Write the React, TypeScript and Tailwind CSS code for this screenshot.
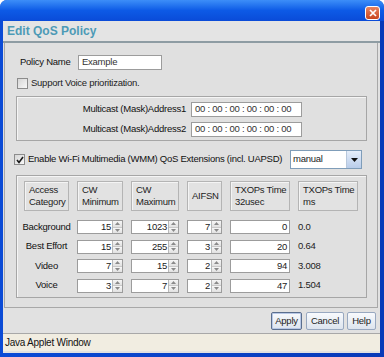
import React from "react";

const font = "font-['Liberation_Sans',Arial,sans-serif]";

const rows = [
  { name: "Background", cwMin: "15", cwMax: "1023", aifsn: "7", txop: "0", ms: "0.0" },
  { name: "Best Effort", cwMin: "15", cwMax: "255", aifsn: "3", txop: "20", ms: "0.64" },
  { name: "Video", cwMin: "7", cwMax: "15", aifsn: "2", txop: "94", ms: "3.008" },
  { name: "Voice", cwMin: "3", cwMax: "7", aifsn: "2", txop: "47", ms: "1.504" },
];

function Arrow({ up }: { up?: boolean }) {
  return (
    <svg width="5" height="3" viewBox="0 0 5 3">
      <path d={up ? "M0 3 L2.5 0 L5 3 Z" : "M0 0 L5 0 L2.5 3 Z"} fill="#8a8a8a" />
    </svg>
  );
}

function Spinner({ value }: { value: string }) {
  return (
    <div className="flex h-[14px] w-full border border-[#9c9c9c] bg-white">
      <div className="flex-1 pr-[1px] text-right leading-[12px] text-[#222]">{value}</div>
      <div className="flex w-[10px] flex-col border-l border-[#b9b9b9]">
        <div className="flex flex-1 items-center justify-center border-b border-[#c9c9c9] bg-gradient-to-b from-[#f7f7f7] to-[#e1e1e1]">
          <Arrow up />
        </div>
        <div className="flex flex-1 items-center justify-center bg-gradient-to-b from-[#f7f7f7] to-[#e1e1e1]">
          <Arrow />
        </div>
      </div>
    </div>
  );
}

function HeadCell({ lines, center }: { lines: string[]; center?: boolean }) {
  return (
    <div
      className={`flex h-[30px] flex-col border border-[#b4b4b4] bg-[#e2e2e2] pl-[4px] leading-[12px] text-[#222] shadow-[inset_1px_1px_0_#f4f4f4] ${
        center ? "justify-center" : "justify-center"
      }`}
    >
      {lines.map((l) => (
        <span key={l} className="whitespace-nowrap">
          {l}
        </span>
      ))}
    </div>
  );
}

function Check({ checked }: { checked?: boolean }) {
  return (
    <div className="flex h-[11px] w-[11px] items-center justify-center border border-[#8c8c8c] bg-gradient-to-br from-[#d6d6d6] to-[#f8f8f8]">
      {checked && (
        <svg width="8" height="8" viewBox="0 0 8 8">
          <path d="M1 4 L3 6.5 L7 1" stroke="#1a1a1a" strokeWidth="1.6" fill="none" />
        </svg>
      )}
    </div>
  );
}

export default function App() {
  return (
    <div
      className={`${font} flex h-[357px] w-[384px] flex-col overflow-hidden rounded-t-[7px] bg-gradient-to-r from-[#0b4bd6] to-[#0839b8] text-[9.5px] tracking-[-0.25px] text-[#111]`}
    >
      {/* title bar */}
      <div className="flex h-[21px] items-start justify-end bg-gradient-to-b from-[#3d8ef8] via-[#0d5ae6] to-[#0a4bd8] pr-[4px] pt-[6px]">
        <div className="flex h-[14px] w-[15px] items-center justify-center rounded-[3px] border border-white bg-gradient-to-b from-[#e8835f] to-[#c8441c]">
          <svg width="8" height="8" viewBox="0 0 8 8">
            <path d="M1 1 L7 7 M7 1 L1 7" stroke="#fff" strokeWidth="1.7" />
          </svg>
        </div>
      </div>

      {/* body */}
      <div className="mb-[4px] ml-[3px] mr-[4px] flex flex-1 flex-col bg-[#e1e1e1]">
        <div className="flex h-[22px] items-center border-b-2 border-[#8e9ca3] bg-[#e4e4e4] pl-[4px] text-[12px] font-bold tracking-normal text-[#4d9ab6]">
          Edit QoS Policy
        </div>

        <div className="ml-[1px] mr-[2px] flex h-[265px] flex-col border-b border-l border-r border-[#a8a8a8] bg-[#e0e0e0]">
          {/* policy name */}
          <div className="mt-[12px] flex h-[15px] items-center pl-[15px]">
            <span className="w-[58px]">Policy Name</span>
            <div className="flex h-[15px] w-[84px] items-center border border-[#9c9c9c] bg-white pl-[3px] text-[#333]">
              Example
            </div>
          </div>

          {/* voice prioritization */}
          <div className="mt-[8px] flex h-[11px] items-center gap-[3px] pl-[12px] text-[#222]">
            <Check />
            <span>Support Voice prioritization.</span>
          </div>

          {/* multicast group */}
          <div className="ml-[11px] mt-[7px] flex h-[45px] w-[351px] flex-col gap-[5px] border border-[#a6a6a6] pt-[5px] shadow-[inset_1px_1px_0_#f5f5f5]">
            {["Multicast (Mask)Address1", "Multicast (Mask)Address2"].map((l) => (
              <div key={l} className="flex h-[15px] items-center">
                <span className="w-[169px] text-right">{l}</span>
                <div className="ml-[5px] flex h-[15px] w-[111px] items-center border border-[#9c9c9c] bg-white pl-[3px] text-[#333]">
                  00 : 00 : 00 : 00 : 00 : 00
                </div>
              </div>
            ))}
          </div>

          {/* WMM */}
          <div className="mt-[9px] flex h-[19px] items-center pl-[9px]">
            <Check checked />
            <span className="ml-[3px] w-[262px] whitespace-nowrap">
              Enable Wi-Fi Multimedia (WMM) QoS Extensions (incl. UAPSD)
            </span>
            <div className="flex h-[19px] w-[72px] border border-[#7f9db9] bg-white">
              <div className="flex flex-1 items-center pl-[2px] text-[#222]">manual</div>
              <div className="flex w-[15px] items-center justify-center border-l border-[#b8c8dc] bg-gradient-to-b from-[#e6eefa] to-[#b9cdea]">
                <svg width="7" height="4" viewBox="0 0 7 4">
                  <path d="M0 0 L7 0 L3.5 4 Z" fill="#111" />
                </svg>
              </div>
            </div>
          </div>

          {/* table group */}
          <div className="ml-[11px] mt-[6px] flex h-[123px] w-[351px] flex-col border border-[#a6a6a6] pl-[7px] pt-[5px] shadow-[inset_1px_1px_0_#f5f5f5]">
            <div className="grid grid-cols-[45px_46px_48px_35px_60px_60px] gap-x-[8px]">
              <HeadCell lines={["Access", "Category"]} />
              <HeadCell lines={["CW", "Minimum"]} />
              <HeadCell lines={["CW", "Maximum"]} />
              <HeadCell lines={["AIFSN"]} center />
              <HeadCell lines={["TXOPs Time", "32usec"]} />
              <HeadCell lines={["TXOPs Time", "ms"]} />
            </div>
            <div className="mt-[9px] grid grid-cols-[45px_46px_48px_35px_60px_60px] gap-x-[8px] gap-y-[5.5px]">
              {rows.map((r) => (
                <React.Fragment key={r.name}>
                  <div className="flex h-[14px] items-center justify-center whitespace-nowrap">{r.name}</div>
                  <Spinner value={r.cwMin} />
                  <Spinner value={r.cwMax} />
                  <Spinner value={r.aifsn} />
                  <div className="h-[14px] border border-[#9c9c9c] bg-white pr-[2px] text-right leading-[12px] text-[#222]">
                    {r.txop}
                  </div>
                  <div className="flex h-[14px] items-center text-[#222]">{r.ms}</div>
                </React.Fragment>
              ))}
            </div>
          </div>
        </div>

        {/* buttons */}
        <div className="flex h-[25px] items-start justify-end pr-[4px] pt-[4px]">
          <button className="h-[18px] w-[31px] rounded-[2px] border border-[#5a6e8e] bg-gradient-to-b from-[#f8fafd] to-[#dde4ee] text-[#222] shadow-[inset_0_0_0_1px_#b8c8e6]">
            Apply
          </button>
          <button className="ml-[4px] h-[18px] w-[38px] rounded-[2px] border border-[#98a8c0] bg-gradient-to-b from-[#f8fafd] to-[#dde4ee] text-[#222]">
            Cancel
          </button>
          <button className="ml-[3px] h-[18px] w-[29px] rounded-[2px] border border-[#98a8c0] bg-gradient-to-b from-[#f8fafd] to-[#dde4ee] text-[#222]">
            Help
          </button>
        </div>

        {/* status bar */}
        <div className="flex h-[18px] items-center border-t border-[#a8a8a8] bg-[#f1ede1] pl-[2px] text-[10px]">
          Java Applet Window
        </div>
      </div>
    </div>
  );
}
